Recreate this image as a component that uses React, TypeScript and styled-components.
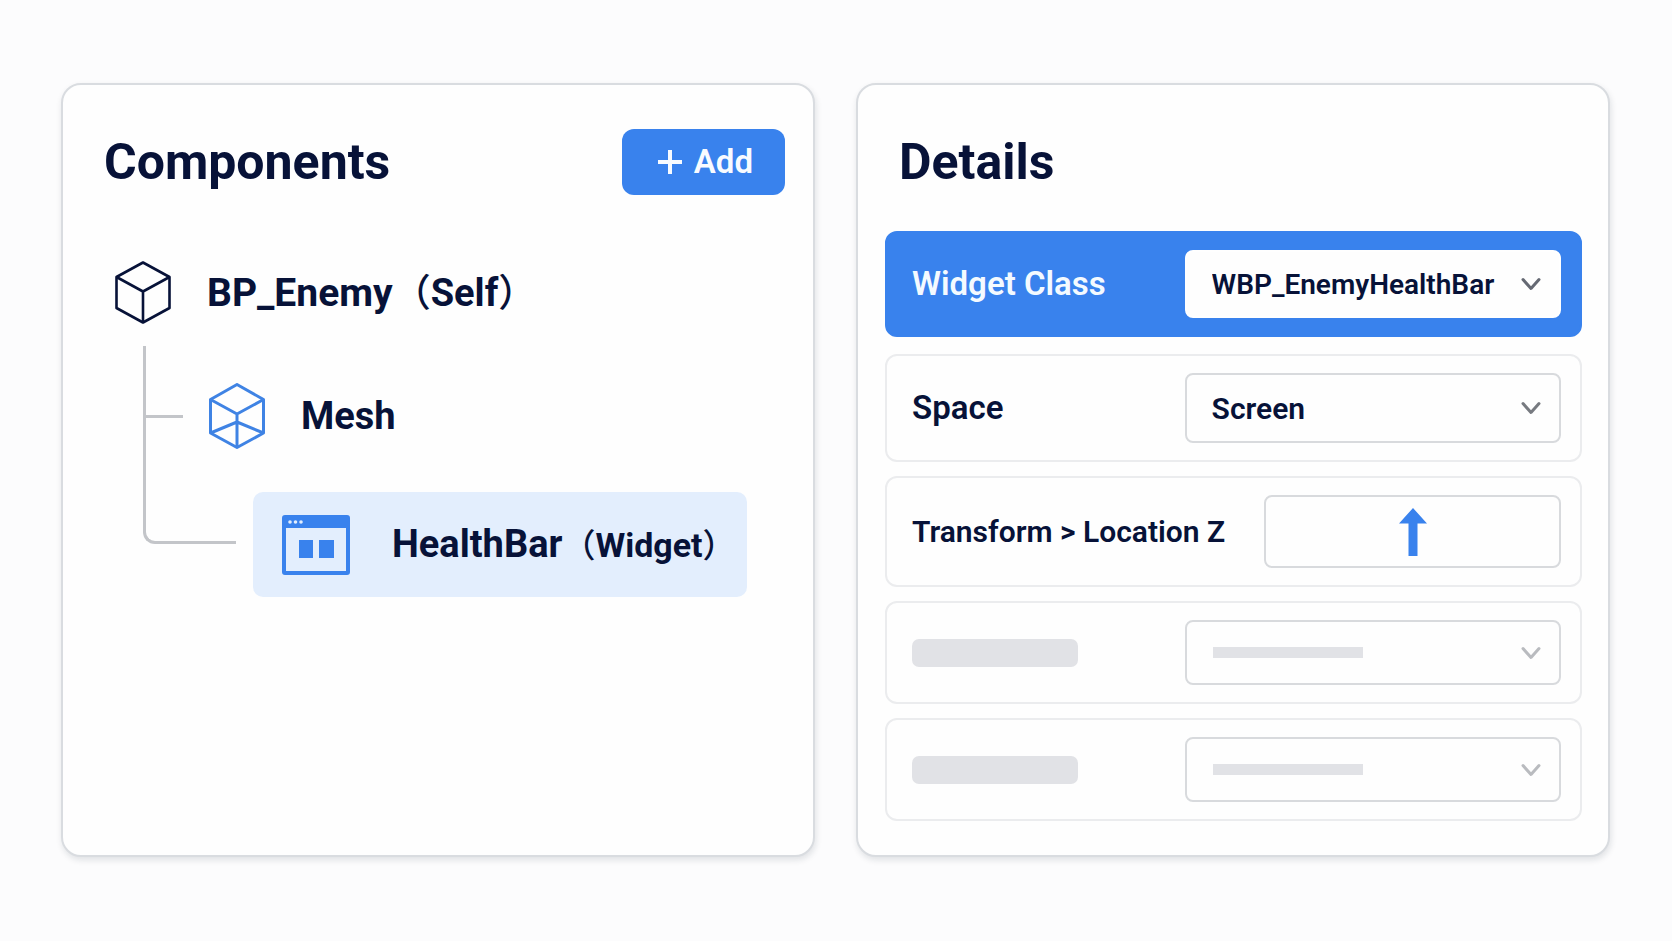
import React, { useState } from 'react';
import styled, { createGlobalStyle } from 'styled-components';

const ink = '#071238';
const blue = '#3982ed';
const skeleton = '#e1e2e6';

const GlobalStyle = createGlobalStyle`
  *, *::before, *::after { box-sizing: border-box; }
  body {
    margin: 0;
    background: #fcfcfd;
    color: ${ink};
    font-family: Roboto, "Noto Sans CJK JP", sans-serif;
    font-weight: 600;
  }
  button, select { font: inherit; color: inherit; }
`;

const Page = styled.main`
  display: grid;
  grid-template-columns: minmax(0, 1fr) minmax(0, 1fr);
  gap: 41px;
  min-height: 100vh;
  padding: 83px 62px 84px 61px;
`;

const Panel = styled.section`
  padding: 44px 26px 33px 27px;
  border: 2px solid #d9dce0;
  border-radius: 20px;
  background: #fefefe;
  box-shadow: 1px 3px 6px rgba(20, 30, 50, 0.12);
`;

const PanelHeader = styled.header`
  display: flex;
  align-items: center;
  justify-content: space-between;
  min-height: 66px;
  padding: 0 2px 0 14px;
`;

const Title = styled.h2`
  margin: 0;
  font-size: 50px;
  line-height: 60px;
  font-weight: 700;
`;

const AddButton = styled.button`
  display: flex;
  align-items: center;
  gap: 12px;
  height: 66px;
  padding: 0 32px 0 36px;
  border: 0;
  border-radius: 12px;
  background: ${blue};
  color: #f8fbff;
  font-size: 33px;
  line-height: 40px;
  cursor: pointer;
`;

const Tree = styled.ul`
  margin: 66px 0 0;
  padding: 0 0 0 25px;
  list-style: none;
`;

const TreeItem = styled.li`
  margin: 0;
`;

const NodeRow = styled.div<{ $selected?: boolean; $root?: boolean }>`
  display: flex;
  align-items: center;
  gap: ${(p) => (p.$selected ? '42px' : '36px')};
  width: fit-content;
  height: ${(p) => (p.$selected ? '105px' : '64px')};
  padding: ${(p) => (p.$selected ? '0 11px 0 29px' : '0')};
  border-radius: 10px;
  background: ${(p) => (p.$selected ? '#e3eefd' : 'transparent')};
  font-size: ${(p) => (p.$root ? '39px' : '38px')};
  line-height: 48px;
  font-weight: 700;
  white-space: nowrap;
`;

const NodeType = styled.span<{ $wide?: boolean }>`
  font-size: ${(p) => (p.$wide ? '38px' : '34px')};
`;

const Paren = styled.span<{ $wide?: boolean }>`
  font-family: "Noto Sans CJK JP", sans-serif;
  font-size: ${(p) => (p.$wide ? '38px' : '33px')};
  font-weight: 500;
  line-height: 1;
`;

const ChildTree = styled.ul`
  position: relative;
  display: grid;
  gap: 44px;
  margin: 21px 0 0 28px;
  padding: 38px 0 0;
  list-style: none;

  &::before {
    content: '';
    position: absolute;
    top: 0;
    bottom: 53px;
    left: 0;
    width: 93px;
    border: solid #c3c5c9;
    border-width: 0 0 3px 3px;
    border-bottom-left-radius: 12px;
  }
`;

const ChildItem = styled.li<{ $indent: number; $stub?: boolean }>`
  display: flex;
  align-items: center;
  padding-left: ${(p) => p.$indent}px;

  &::before {
    content: '';
    width: 40px;
    height: 3px;
    margin-left: -${(p) => p.$indent}px;
    margin-right: ${(p) => p.$indent - 40}px;
    background: ${(p) => (p.$stub ? '#c3c5c9' : 'transparent')};
  }
`;

const Properties = styled.div`
  display: grid;
  gap: 14px;
  margin-top: 36px;
`;

const PropertyRow = styled.div<{ $active?: boolean }>`
  display: flex;
  align-items: center;
  gap: 39px;
  margin-bottom: ${(p) => (p.$active ? '3px' : '0')};
  padding: 17px 19px 17px 25px;
  border: 2px solid ${(p) => (p.$active ? blue : '#ebecee')};
  border-radius: 12px;
  background: ${(p) => (p.$active ? blue : 'transparent')};
  color: ${(p) => (p.$active ? '#f4faff' : ink)};
`;

const PropertyLabel = styled.label<{ $compact?: boolean }>`
  flex: ${(p) => (p.$compact ? 'none' : '1')};
  font-size: ${(p) => (p.$compact ? '30px' : '33px')};
  line-height: 40px;
  white-space: nowrap;
`;

const LabelSkeleton = styled.span`
  width: 166px;
  height: 28px;
  margin-right: auto;
  border-radius: 7px;
  background: ${skeleton};
`;

const Field = styled.div`
  position: relative;
  display: flex;
  align-items: center;
  flex: 0 0 58%;
`;

const SelectBox = styled.select<{ $bare?: boolean }>`
  appearance: none;
  width: 100%;
  height: ${(p) => (p.disabled ? '65px' : p.$bare ? '68px' : '70px')};
  padding: 2px 50px 0 25px;
  border: 2px solid ${(p) => (p.$bare ? '#fff' : '#d8dadd')};
  border-radius: 8px;
  background: #fefefe;
  color: ${ink};
  font-size: ${(p) => (p.$bare ? '28px' : '30px')};
  line-height: 40px;
  opacity: 1;
`;

const ValueSkeleton = styled.span`
  position: absolute;
  left: 28px;
  width: 150px;
  height: 11px;
  background: ${skeleton};
`;

const ChevronIcon = styled.svg<{ $tone: string }>`
  position: absolute;
  right: 19px;
  width: 22px;
  height: 16px;
  fill: none;
  stroke: ${(p) => p.$tone};
  stroke-width: 3;
  stroke-linecap: round;
  stroke-linejoin: round;
  pointer-events: none;
`;

const StepButton = styled.button`
  display: flex;
  align-items: center;
  justify-content: center;
  flex: 1;
  height: 73px;
  padding: 0;
  border: 2px solid #d8dadd;
  border-radius: 8px;
  background: #fefefe;
  cursor: pointer;
`;

const Chevron = ({ tone }: { tone: string }) => (
  <ChevronIcon $tone={tone} viewBox="0 0 22 16" aria-hidden="true">
    <path d="M3 3.5 11 12.5 19 3.5" />
  </ChevronIcon>
);

const PlusIcon = () => (
  <svg width="24" height="24" viewBox="0 0 24 24" fill="none" stroke="currentColor" strokeWidth="4" aria-hidden="true">
    <path d="M12 0v24M0 12h24" />
  </svg>
);

const CubeIcon = () => (
  <svg width="56" height="64" viewBox="0 0 56 64" fill="none" stroke={ink} strokeWidth="2.6" strokeLinejoin="round" aria-hidden="true">
    <path d="M28 1.500 54.500 16V47L28 61.500 1.500 47V16Z" />
    <path d="M1.500 16 28 30.500 54.500 16M28 30.500V61.500" />
  </svg>
);

const MeshIcon = () => (
  <svg width="56" height="66" viewBox="0 0 56 66" fill="none" stroke="#3f83e4" strokeWidth="3" strokeLinejoin="round" aria-hidden="true">
    <path d="M28 1.500 54.500 16.500V50L28 64.500 1.500 50V16.500Z" />
    <path d="M1.500 16.500 28 31 54.500 16.500M28 31V64M1.500 50 28 39 54.500 50" />
  </svg>
);

const WidgetIcon = () => (
  <svg width="68" height="60" viewBox="0 0 68 60" aria-hidden="true">
    <rect x="2" y="2" width="64" height="56" rx="1" fill="none" stroke={blue} strokeWidth="4" />
    <path d="M1 1h66v12H1z" fill={blue} />
    <g fill="#e3eefd">
      <circle cx="8" cy="7" r="1.800" />
      <circle cx="13.500" cy="7" r="1.800" />
      <circle cx="19" cy="7" r="1.800" />
    </g>
    <path d="M17 25h14v18H17zM37 25h15v18H37z" fill={blue} />
  </svg>
);

const UpArrowIcon = () => (
  <svg width="28" height="48" viewBox="0 0 28 48" fill={blue} aria-hidden="true">
    <path d="M14 0 28 15.500H18.500V48H9.500V15.500H0Z" />
  </svg>
);

export default function App() {
  const [height, setHeight] = useState(0);

  return (
    <>
      <GlobalStyle />
      <Page>
        <Panel aria-labelledby="components-title">
          <PanelHeader>
            <Title id="components-title">Components</Title>
            <AddButton type="button">
              <PlusIcon />
              Add
            </AddButton>
          </PanelHeader>
          <Tree>
            <TreeItem>
              <NodeRow $root>
                <CubeIcon />
                <span>
                  BP_Enemy<Paren $wide>（</Paren>
                  <NodeType $wide>Self</NodeType>
                  <Paren $wide>）</Paren>
                </span>
              </NodeRow>
              <ChildTree>
                <ChildItem $indent={66} $stub>
                  <NodeRow>
                    <MeshIcon />
                    <span>Mesh</span>
                  </NodeRow>
                </ChildItem>
                <ChildItem $indent={110}>
                  <NodeRow $selected aria-current="true">
                    <WidgetIcon />
                    <span>
                      HealthBar<Paren>（</Paren>
                      <NodeType>Widget</NodeType>
                      <Paren>）</Paren>
                    </span>
                  </NodeRow>
                </ChildItem>
              </ChildTree>
            </TreeItem>
          </Tree>
        </Panel>

        <Panel aria-labelledby="details-title">
          <PanelHeader>
            <Title id="details-title">Details</Title>
          </PanelHeader>
          <Properties>
            <PropertyRow $active>
              <PropertyLabel htmlFor="widget-class">Widget Class</PropertyLabel>
              <Field>
                <SelectBox id="widget-class" $bare>
                  <option>WBP_EnemyHealthBar</option>
                </SelectBox>
                <Chevron tone="#656973" />
              </Field>
            </PropertyRow>
            <PropertyRow>
              <PropertyLabel htmlFor="space">Space</PropertyLabel>
              <Field>
                <SelectBox id="space">
                  <option>Screen</option>
                </SelectBox>
                <Chevron tone="#777a80" />
              </Field>
            </PropertyRow>
            <PropertyRow>
              <PropertyLabel htmlFor="location-z" $compact>
                Transform &gt; Location Z
              </PropertyLabel>
              <StepButton id="location-z" type="button" value={height} onClick={() => setHeight(height + 10)}>
                <UpArrowIcon />
              </StepButton>
            </PropertyRow>
            {['first', 'second'].map((key) => (
              <PropertyRow key={key}>
                <LabelSkeleton />
                <Field>
                  <SelectBox disabled aria-label="Loading property" />
                  <ValueSkeleton />
                  <Chevron tone="#b9bbbf" />
                </Field>
              </PropertyRow>
            ))}
          </Properties>
        </Panel>
      </Page>
    </>
  );
}
